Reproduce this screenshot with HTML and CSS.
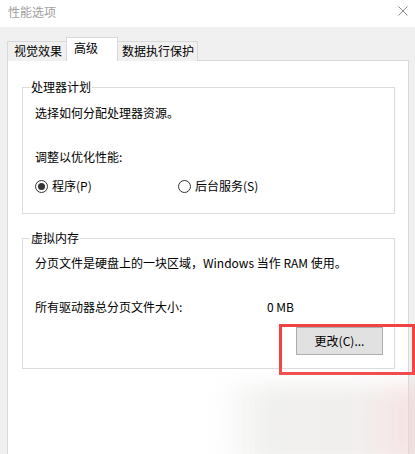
FILE: index.html
```html
<!DOCTYPE html>
<html lang="zh-CN">
<head>
<meta charset="utf-8">
<title>性能选项</title>
<link rel="stylesheet" href="styles.css">
</head>
<body>
<div class="window">
  <div class="titlebar">
    <span class="title">性能选项</span>
    <svg class="close" width="10" height="10" viewBox="0 0 10 10"><path d="M0.5 0.5 L9.5 9.5 M9.5 0.5 L0.5 9.5" stroke="#8a8a8a" stroke-width="1" fill="none"/></svg>
  </div>
  <div class="body">
    <div class="tabs">
      <div class="tab tab-first">视觉效果</div>
      <div class="tab tab-active">高级</div>
      <div class="tab tab-last">数据执行保护</div>
    </div>
    <div class="panel">
      <fieldset class="group group-cpu">
        <legend>处理器计划</legend>
        <div class="content">
          <p class="line first">选择如何分配处理器资源。</p>
          <p class="line gap-lg">调整以优化性能:</p>
          <div class="radios">
            <label class="radio"><span class="dot checked"></span>程序(P)</label>
            <label class="radio"><span class="dot"></span>后台服务(S)</label>
          </div>
        </div>
      </fieldset>
      <fieldset class="group group-vm">
        <legend>虚拟内存</legend>
        <div class="content">
          <p class="line first-vm">分页文件是硬盘上的一块区域，Windows 当作 RAM 使用。</p>
          <div class="line gap-lg size-row"><span class="size-label">所有驱动器总分页文件大小:</span><span>0 MB</span></div>
          <div class="btn-row"><button class="btn">更改(C)...</button></div>
        </div>
      </fieldset>
    </div>
  </div>
  <div class="highlight"></div>
  <div class="smudge"></div>
</div>
</body>
</html>
```

FILE: styles.css
```css
* { box-sizing: border-box; }
html, body { margin: 0; padding: 0; }
body {
  width: 415px;
  height: 454px;
  overflow: hidden;
  background: #f0f0f0;
  font-family: "Noto Sans CJK SC", "Microsoft YaHei", sans-serif;
  font-size: 12px;
  line-height: 16px;
  color: #000;
}
.window { position: relative; width: 415px; height: 454px; overflow: hidden; }
.titlebar {
  height: 27px;
  background: #fff;
  display: flex;
  justify-content: space-between;
  align-items: flex-start;
  padding: 4px 7px 0 8px;
}
.title { color: #a0a0a0; }
.close { margin-top: 2px; }
.body { background: #f0f0f0; }
.tabs {
  display: flex;
  align-items: flex-end;
  margin-left: 7px;
  padding-top: 10px;
  height: 34px;
  margin-bottom: -1px;
}
.tab {
  height: 20px;
  border: 1px solid #d9d9d9;
  border-bottom: none;
  background: #f0f0f0;
  padding-top: 1px;
  white-space: nowrap;
}
.tab-first { width: 59px; border-right: none; padding-left: 6px; }
.tab-active {
  width: 52px;
  height: 24px;
  background: #fff;
  padding-top: 2px;
  padding-left: 7px;
  position: relative;
  z-index: 1;
}
.tab-last { width: 80px; border-left: none; padding-left: 4px; }
.panel {
  margin-left: 7px;
  width: 402px;
  height: 420px;
  border: 1px solid #d9d9d9;
  background: #fff;
  padding-top: 18px;
}
.group {
  margin: 0 0 0 14px;
  width: 373px;
  min-inline-size: 0;
  border: 1px solid #dcdcdc;
  padding: 0;
}
.group legend {
  margin-left: 7px;
  padding: 0 1px;
  line-height: 16px;
  font-size: 12px;
}
.content { padding-left: 12px; }
.group-cpu .content { padding-bottom: 19px; }
.group-vm { margin-top: 16px; }
.group-vm .content { padding-bottom: 13px; }
.line { margin: 0; height: 16px; white-space: nowrap; }
.first { margin-top: 10px; }
.first-vm { margin-top: 9px; }
.gap-lg { margin-top: 28px; }
.radios { display: flex; margin-top: 13px; height: 16px; }
.radio { display: flex; align-items: center; width: 143px; white-space: nowrap; }
.dot {
  width: 13px;
  height: 13px;
  border: 1px solid #333;
  border-radius: 50%;
  margin-right: 4px;
  display: flex;
  align-items: center;
  justify-content: center;
  background: #fff;
}
.dot.checked::after {
  content: "";
  width: 7px;
  height: 7px;
  border-radius: 50%;
  background: #333;
}
.size-row { display: flex; }
.size-label { width: 232px; }
.btn-row { display: flex; justify-content: flex-end; margin-top: 12px; padding-right: 11px; }
.btn {
  width: 87px;
  height: 28px;
  border: 1px solid #adadad;
  background: #e1e1e1;
  font-family: inherit;
  font-size: 12px;
  line-height: 16px;
  color: #000;
  padding: 0;
  margin: 0;
}
.highlight {
  position: absolute;
  left: 279px;
  top: 324px;
  width: 136px;
  height: 51px;
  border: 3px solid #f24343;
}
.smudge {
  position: absolute;
  left: 215px;
  top: 385px;
  width: 210px;
  height: 80px;
  background: linear-gradient(90deg, rgba(236,236,234,0) 0%, rgba(234,234,232,0.7) 25%, rgba(236,232,230,0.7) 70%, rgba(240,200,200,0.55) 100%);
  filter: blur(10px);
}
```
